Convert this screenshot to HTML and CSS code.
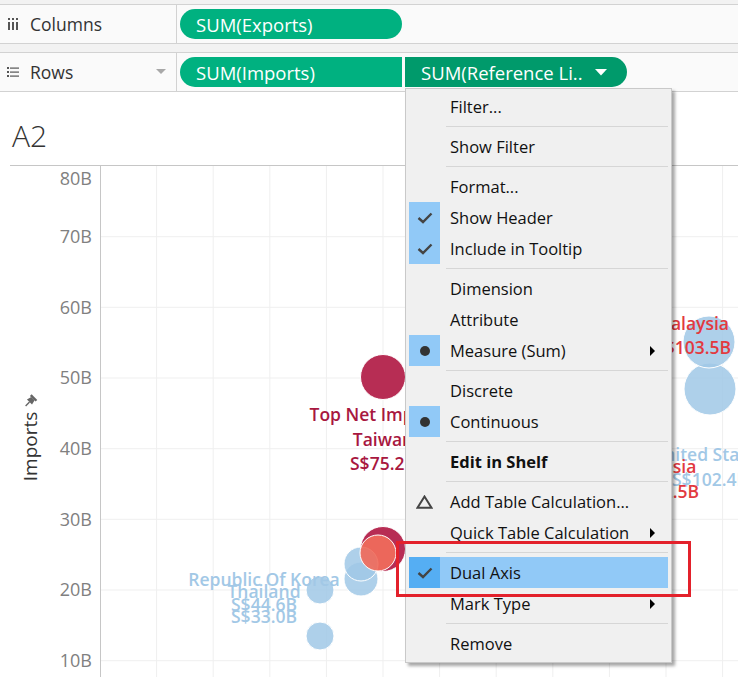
FILE: index.html
```html
<!DOCTYPE html>
<html>
<head>
<meta charset="utf-8">
<link rel="stylesheet" href="styles.css">
</head>
<body>
<div class="app">
  <div class="shelves">
    <div class="shelf">
      <div class="shelf-label">
        <svg class="shelf-icon" width="12" height="12" viewBox="0 0 12 12"><rect x="1" y="0" width="2" height="2" fill="#555"/><rect x="5" y="0" width="2" height="2" fill="#555"/><rect x="9" y="0" width="2" height="2" fill="#555"/><rect x="1" y="4" width="2" height="8" fill="#555"/><rect x="5" y="4" width="2" height="8" fill="#555"/><rect x="9" y="4" width="2" height="8" fill="#555"/></svg>
        <span class="shelf-name">Columns</span>
      </div>
      <div class="shelf-pills">
        <div class="pill pill-green">SUM(Exports)</div>
      </div>
    </div>
    <div class="shelf-gap"></div>
    <div class="shelf">
      <div class="shelf-label">
        <svg class="shelf-icon" width="12" height="12" viewBox="0 0 12 12"><rect x="0" y="1" width="2" height="2" fill="#555"/><rect x="3" y="1.5" width="9" height="1.2" fill="#555"/><rect x="0" y="5" width="2" height="2" fill="#555"/><rect x="3" y="5.5" width="9" height="1.2" fill="#555"/><rect x="0" y="9" width="2" height="2" fill="#555"/><rect x="3" y="9.5" width="9" height="1.2" fill="#555"/></svg>
        <span class="shelf-name">Rows</span>
        <svg class="shelf-caret" width="10" height="6" viewBox="0 0 10 6"><path d="M0 0 L10 0 L5 5 Z" fill="#a8a8a8"/></svg>
      </div>
      <div class="shelf-pills">
        <div class="pill pill-green pill-join-right">SUM(Imports)</div>
        <div class="pill pill-dark pill-join-left">SUM(Reference Li..<svg class="pill-caret" width="12" height="7" viewBox="0 0 12 7"><path d="M0 0 L12 0 L6 6.5 Z" fill="#fff"/></svg></div>
      </div>
    </div>
  </div>

  <div class="sheet">
    <div class="sheet-title">A2</div>
    <svg class="chart" width="738" height="517" viewBox="0 160 738 517">
      <g class="grid">
        <line x1="101" y1="236.7" x2="738" y2="236.7"/>
        <line x1="101" y1="307.3" x2="738" y2="307.3"/>
        <line x1="101" y1="378" x2="738" y2="378"/>
        <line x1="101" y1="448.7" x2="738" y2="448.7"/>
        <line x1="101" y1="519.3" x2="738" y2="519.3"/>
        <line x1="101" y1="590" x2="738" y2="590"/>
        <line x1="101" y1="660.7" x2="738" y2="660.7"/>
        <line x1="156.6" y1="166" x2="156.6" y2="677"/>
        <line x1="213.2" y1="166" x2="213.2" y2="677"/>
        <line x1="269.8" y1="166" x2="269.8" y2="677"/>
        <line x1="326.4" y1="166" x2="326.4" y2="677"/>
        <line x1="383" y1="166" x2="383" y2="677"/>
        <line x1="439.6" y1="166" x2="439.6" y2="677"/>
        <line x1="496.2" y1="166" x2="496.2" y2="677"/>
        <line x1="552.8" y1="166" x2="552.8" y2="677"/>
        <line x1="609.4" y1="166" x2="609.4" y2="677"/>
        <line x1="666" y1="166" x2="666" y2="677"/>
        <line x1="722.6" y1="166" x2="722.6" y2="677"/>
      </g>
      <line class="frame" x1="10" y1="165.5" x2="738" y2="165.5"/>
      <line class="frame" x1="100.5" y1="165" x2="100.5" y2="677"/>
      <g class="axis-labels">
        <text x="92" y="185">80B</text>
        <text x="92" y="243">70B</text>
        <text x="92" y="313.5">60B</text>
        <text x="92" y="384">50B</text>
        <text x="92" y="455">40B</text>
        <text x="92" y="525.5">30B</text>
        <text x="92" y="596">20B</text>
        <text x="92" y="667">10B</text>
      </g>
      <text class="axis-title" transform="translate(37 446.5) rotate(-90)">Imports</text>
      <g class="pin" transform="translate(29.5 402) rotate(45)">
        <rect x="-4" y="-7" width="8" height="2.4" fill="#666"/>
        <path d="M-2.4 -4.8 L2.4 -4.8 L3.6 0 L-3.6 0 Z" fill="#666"/>
        <rect x="-0.7" y="0" width="1.4" height="5.5" fill="#666"/>
      </g>

      <g class="marks">
        <circle class="m-blue" cx="320" cy="636" r="14"/>
        <circle class="m-blue" cx="320" cy="590" r="14"/>
        <circle class="m-red" cx="383" cy="377" r="22.5"/>
        <circle class="m-red" cx="383" cy="549" r="22.5"/>
        <circle class="m-blue" cx="361" cy="579" r="17"/>
        <circle class="m-blue" cx="361" cy="564" r="17"/>
        <circle class="m-salmon" cx="378" cy="553" r="18"/>
        <circle class="m-blue" cx="710" cy="389" r="26"/>
        <circle class="m-blue" cx="709" cy="342" r="26"/>
      </g>
      <g class="labels">
        <text class="l-blue" x="264" y="586">Republic Of Korea</text>
        <text class="l-blue" x="264" y="598">Thailand</text>
        <text class="l-blue" x="264" y="611">S$44.6B</text>
        <text class="l-blue" x="264" y="623">S$33.0B</text>
        <text class="l-dark" x="383" y="421">Top Net Importer</text>
        <text class="l-dark" x="383" y="446">Taiwan</text>
        <text class="l-dark" x="383" y="470">S$75.2B</text>
        <text class="l-red end" x="729" y="330">Malaysia</text>
        <text class="l-red end" x="731" y="354">S$103.5B</text>
        <text class="l-blue" x="708" y="461">United States</text>
        <text class="l-blue" x="710" y="486">S$102.4B</text>
        <text class="l-red" x="655" y="473">Indonesia</text>
        <text class="l-red" x="666" y="498">S$62.5B</text>
      </g>
    </svg>
  </div>

  <div class="menu">
    <div class="mi"><span class="mi-icon"></span><span class="mi-text">Filter...</span></div>
    <div class="msep"></div>
    <div class="mi"><span class="mi-icon"></span><span class="mi-text">Show Filter</span></div>
    <div class="msep"></div>
    <div class="mi"><span class="mi-icon"></span><span class="mi-text">Format...</span></div>
    <div class="mi"><span class="mi-icon on"><svg width="16" height="12" viewBox="0 0 16 12"><path d="M1.5 6 L6 10 L14.5 1.5" fill="none" stroke="#444" stroke-width="2.4"/></svg></span><span class="mi-text">Show Header</span></div>
    <div class="mi"><span class="mi-icon on"><svg width="16" height="12" viewBox="0 0 16 12"><path d="M1.5 6 L6 10 L14.5 1.5" fill="none" stroke="#444" stroke-width="2.4"/></svg></span><span class="mi-text">Include in Tooltip</span></div>
    <div class="msep"></div>
    <div class="mi"><span class="mi-icon"></span><span class="mi-text">Dimension</span></div>
    <div class="mi"><span class="mi-icon"></span><span class="mi-text">Attribute</span></div>
    <div class="mi"><span class="mi-icon on"><span class="dot"></span></span><span class="mi-text">Measure (Sum)</span><span class="mi-arrow"></span></div>
    <div class="msep"></div>
    <div class="mi"><span class="mi-icon"></span><span class="mi-text">Discrete</span></div>
    <div class="mi"><span class="mi-icon on"><span class="dot"></span></span><span class="mi-text">Continuous</span></div>
    <div class="msep"></div>
    <div class="mi"><span class="mi-icon"></span><span class="mi-text bold">Edit in Shelf</span></div>
    <div class="msep"></div>
    <div class="mi"><span class="mi-icon"><svg width="17" height="14" viewBox="0 0 17 14"><path d="M8.5 1.5 L15.5 12.8 L1.5 12.8 Z" fill="none" stroke="#444" stroke-width="2"/></svg></span><span class="mi-text">Add Table Calculation...</span></div>
    <div class="mi"><span class="mi-icon"></span><span class="mi-text">Quick Table Calculation</span><span class="mi-arrow"></span></div>
    <div class="msep"></div>
    <div class="mi active"><span class="mi-icon on"><svg width="16" height="12" viewBox="0 0 16 12"><path d="M1.5 6 L6 10 L14.5 1.5" fill="none" stroke="#444" stroke-width="2.4"/></svg></span><span class="mi-text">Dual Axis</span></div>
    <div class="mi"><span class="mi-icon"></span><span class="mi-text">Mark Type</span><span class="mi-arrow"></span></div>
    <div class="msep"></div>
    <div class="mi"><span class="mi-icon"></span><span class="mi-text">Remove</span></div>
  </div>

  <div class="callout"></div>
</div>
</body>
</html>
```

FILE: styles.css
```css
html, body {
  margin: 0;
  padding: 0;
  background: #fff;
}
body {
  width: 738px;
  height: 677px;
  overflow: hidden;
  font-family: "Open Sans", "Noto Sans", sans-serif;
  color: #333;
}
.app {
  position: relative;
  width: 738px;
  height: 677px;
  overflow: hidden;
}

/* shelves */
.shelves {
  background: #f2f2f2;
  padding-top: 4px;
}
.shelf {
  display: flex;
  height: 38px;
  background: #fafafa;
  border-top: 1px solid #d2d2d2;
  border-bottom: 1px solid #d2d2d2;
}
.shelf-gap {
  height: 8px;
}
.shelf-label {
  width: 177px;
  box-sizing: border-box;
  border-right: 1px solid #d2d2d2;
  display: flex;
  align-items: center;
  padding-left: 7px;
}
.shelf-icon {
  flex: none;
}
.shelf-name {
  margin-left: 11px;
  font-size: 17.5px;
  color: #333;
}
.shelf-caret {
  margin-left: auto;
  margin-right: 10px;
}
.shelf-pills {
  display: flex;
  align-items: center;
  gap: 3px;
  padding-left: 3px;
}
.pill {
  width: 222px;
  height: 30px;
  box-sizing: border-box;
  border-radius: 15px;
  padding-left: 16px;
  display: flex;
  align-items: center;
  color: #fff;
  font-size: 18.5px;
  white-space: nowrap;
}
.pill-green {
  background: #00b180;
}
.pill-dark {
  background: #009a6b;
}
.pill-join-right {
  border-radius: 15px 0 0 15px;
}
.pill-join-left {
  border-radius: 0 15px 15px 0;
}
.pill-caret {
  margin-left: 12px;
}

/* sheet */
.sheet-title {
  padding: 29px 0 0 12px;
  height: 39px;
  line-height: 30px;
  font-size: 30px;
  font-weight: 300;
  color: #333;
}
.chart {
  display: block;
}
.grid line {
  stroke: #efefef;
  stroke-width: 1;
}
.frame {
  stroke: #c6c6c6;
  stroke-width: 1;
}
.axis-labels text {
  font-family: "Open Sans", sans-serif;
  font-size: 18px;
  fill: #808080;
  text-anchor: end;
}
.axis-title {
  font-family: "Open Sans", sans-serif;
  font-size: 19px;
  fill: #333;
  text-anchor: middle;
}
.m-blue {
  fill: rgba(160, 200, 230, 0.85);
  stroke: #fff;
  stroke-width: 1;
}
.m-red {
  fill: #b72d54;
  stroke: #fff;
  stroke-width: 1;
}
.m-salmon {
  fill: rgba(240, 108, 92, 0.92);
  stroke: #fff;
  stroke-width: 1;
}
.labels text {
  font-family: "Open Sans", sans-serif;
  font-size: 17.5px;
  font-weight: 600;
  text-anchor: middle;
}
.labels text.end {
  text-anchor: end;
}
.l-blue {
  fill: #a2c8e6;
}
.l-dark {
  fill: #a8173f;
}
.l-red {
  fill: #e23a40;
}

/* context menu */
.menu {
  position: absolute;
  left: 405px;
  top: 88px;
  width: 259px;
  padding: 2px 3px 3px 3px;
  background: #f0f0f0;
  border: 1px solid #c9c9c9;
  box-shadow: 3px 3px 3px rgba(0, 0, 0, 0.35);
  font-family: "Open Sans", "Noto Sans", sans-serif;
  font-size: 16.5px;
  color: #111;
}
.mi {
  height: 31px;
  display: flex;
  align-items: center;
}
.mi-icon {
  width: 31px;
  height: 31px;
  flex: none;
  display: flex;
  align-items: center;
  justify-content: center;
}
.mi-icon.on {
  background: #91c9f7;
}
.mi.active {
  background: #91c9f7;
}
.mi.active .mi-icon.on {
  background: #55aef3;
}
.dot {
  width: 10px;
  height: 10px;
  border-radius: 50%;
  background: #333;
}
.mi-text {
  margin-left: 10px;
  white-space: nowrap;
}
.mi-text.bold {
  font-weight: 700;
}
.mi-arrow {
  margin-left: auto;
  margin-right: 13px;
  width: 0;
  height: 0;
  border-top: 5px solid transparent;
  border-bottom: 5px solid transparent;
  border-left: 5px solid #000;
}
.msep {
  height: 1px;
  margin: 4px 0 4px 37px;
  background: #d6d6d6;
}

.callout {
  position: absolute;
  left: 396px;
  top: 541px;
  width: 295px;
  height: 56px;
  box-sizing: border-box;
  border: 3px solid #e3212b;
}
```
